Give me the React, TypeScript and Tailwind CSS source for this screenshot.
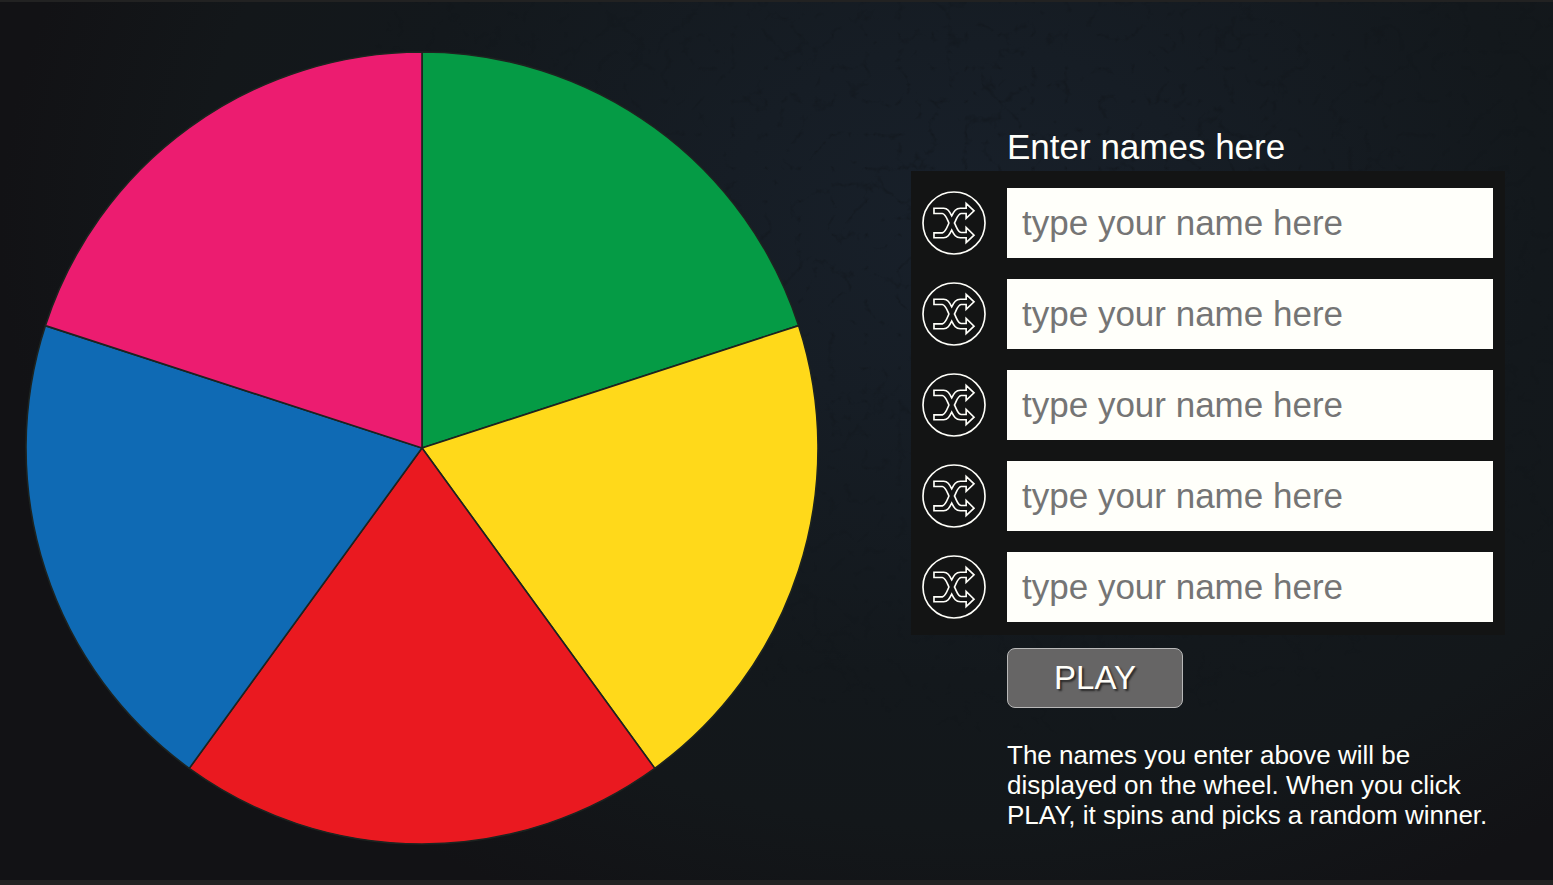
import React, { useState } from 'react';

const SLICES = ['#059b45', '#ffd91a', '#ea1920', '#0f6ab4', '#ec1c70'];
const NAME_POOL = ['Alex', 'Sam', 'Robin', 'Charlie', 'Jamie', 'Taylor', 'Morgan', 'Casey'];

const SIZE = 794;
const CENTER = SIZE / 2;
const RADIUS = 396;
const STEP = 360 / SLICES.length;

// Point on the rim, measured clockwise from 12 o'clock
function rimPoint(degrees: number, radius: number = RADIUS) {
  const rad = (degrees * Math.PI) / 180;
  return { x: CENTER + radius * Math.sin(rad), y: CENTER - radius * Math.cos(rad) };
}

function slicePath(index: number) {
  const from = rimPoint(index * STEP);
  const to = rimPoint((index + 1) * STEP);
  return `M${CENTER} ${CENTER} L${from.x} ${from.y} A${RADIUS} ${RADIUS} 0 0 1 ${to.x} ${to.y} Z`;
}

function Wheel({ names, rotation }: { names: string[]; rotation: number }) {
  return (
    <svg
      viewBox={`0 0 ${SIZE} ${SIZE}`}
      role="img"
      aria-label="Name wheel"
      className="block w-full transition-transform duration-[4000ms] ease-out"
      style={{ transform: `rotate(${rotation}deg)` }}
    >
      {SLICES.map((color, i) => {
        const middle = rimPoint((i + 0.5) * STEP, 240);
        return (
          <g key={color}>
            <path d={slicePath(i)} fill={color} stroke="#1d2320" strokeWidth="1.6" strokeLinejoin="round" />
            {names[i] && (
              <text x={middle.x} y={middle.y} fill="#fff" fontSize="35" textAnchor="middle">
                {names[i]}
              </text>
            )}
          </g>
        );
      })}
    </svg>
  );
}

function ShuffleIcon() {
  return (
    <svg viewBox="0 0 195 195" className="size-16" fill="none" stroke="#fffffa" aria-hidden="true">
      <circle cx="97.5" cy="97.5" r="94.5" strokeWidth="5" />
      <path
        d="M36.500 52.500 H66 C78 52.500 83 61 90.500 75.500 C98 61 103 52.500 117 52.500 H134.500 V37.500 L158.500 60.500 L134.500 83.500 V68.500 H119 C109 70 106 84 99 97.500 C106 111 109 125 119 126.500 H134.500 V111 L158.500 134.500 L134.500 157.500 V142.500 H117 C103 142.500 98 134 90.500 119 C83 134 78 142.500 66 142.500 H36.500 V127.500 H62 C72 125 76 111 82 97.500 C76 84 72 70 62 68.500 H36.500 Z"
        strokeWidth="5"
        strokeLinejoin="miter"
      />
    </svg>
  );
}

// Faint leather grain behind the page, strongest around the lit area
function LeatherTexture() {
  return (
    <svg
      className="pointer-events-none absolute inset-0 size-full opacity-35 mask-[radial-gradient(ellipse_45%_60%_at_66%_24%,#000_20%,transparent_100%)]"
      aria-hidden="true"
    >
      <filter id="leather" colorInterpolationFilters="sRGB">
        <feTurbulence type="turbulence" baseFrequency="0.03" numOctaves="4" seed="8" />
        <feColorMatrix values="0 0 0 0 0.05  0 0 0 0 0.06  0 0 0 0 0.07  -6 0 0 0 1" />
      </filter>
      <rect width="100%" height="100%" filter="url(#leather)" />
    </svg>
  );
}

export default function App() {
  const [names, setNames] = useState<string[]>(SLICES.map(() => ''));
  const [rotation, setRotation] = useState(0);

  const updateName = (index: number, value: string) => {
    setNames(prev => prev.map((name, i) => (i === index ? value : name)));
  };

  const shuffleName = (index: number) => {
    updateName(index, NAME_POOL[Math.floor(Math.random() * NAME_POOL.length)]);
  };

  const play = () => setRotation(prev => prev + 1440 + Math.floor(Math.random() * 360));

  return (
    <div className="relative min-h-screen overflow-hidden border-t-2 border-b-[5px] border-[#222222] bg-[#121215] bg-[radial-gradient(ellipse_62%_85%_at_62%_26%,#18202a_0%,#161d25_25%,#13181c_60%,#13171a_80%,#121215_100%)] font-['Liberation_Sans',Arial,sans-serif] text-[#fffffa]">
      <LeatherTexture />

      <main className="relative flex items-start justify-between gap-[92px] pt-[49px] pr-12 pl-[25px]">
        {/* Wheel */}
        <div className="min-w-0 max-w-[900px] flex-1">
          <Wheel names={names} rotation={rotation} />
        </div>

        {/* Names form */}
        <form
          className="w-[594px] shrink-0 pt-[76px]"
          onSubmit={e => {
            e.preventDefault();
            play();
          }}
        >
          <h1 className="mb-1 ml-24 text-[35px] leading-10">Enter names here</h1>

          <div className="flex flex-col gap-[21px] bg-[#131414] pt-[17px] pr-3 pb-[13px] pl-[11px]">
            {names.map((name, i) => (
              <div key={i} className="flex items-center gap-[21px]">
                <button
                  type="button"
                  aria-label={`Shuffle name ${i + 1}`}
                  onClick={() => shuffleName(i)}
                  className="shrink-0 cursor-pointer rounded-full"
                >
                  <ShuffleIcon />
                </button>
                <input
                  type="text"
                  value={name}
                  onChange={e => updateName(i, e.target.value)}
                  aria-label={`Name ${i + 1}`}
                  placeholder="type your name here"
                  className="h-[70px] min-w-0 flex-1 bg-[#fffffa] px-[15px] text-[35px] text-[#222222] placeholder:text-[#757575]"
                />
              </div>
            ))}
          </div>

          <div className="ml-24 pt-[13px]">
            <button
              type="submit"
              className="block h-[60px] w-44 cursor-pointer rounded-lg border border-[#b8b8b8] bg-[#666565] text-[33px] text-shadow-[2px_2px_2px_#0009]"
            >
              PLAY
            </button>
            <p className="mt-8 text-[26px] leading-[30px]">
              The names you enter above will be displayed on the wheel. When you click PLAY, it spins and picks a
              random winner.
            </p>
          </div>
        </form>
      </main>
    </div>
  );
}
